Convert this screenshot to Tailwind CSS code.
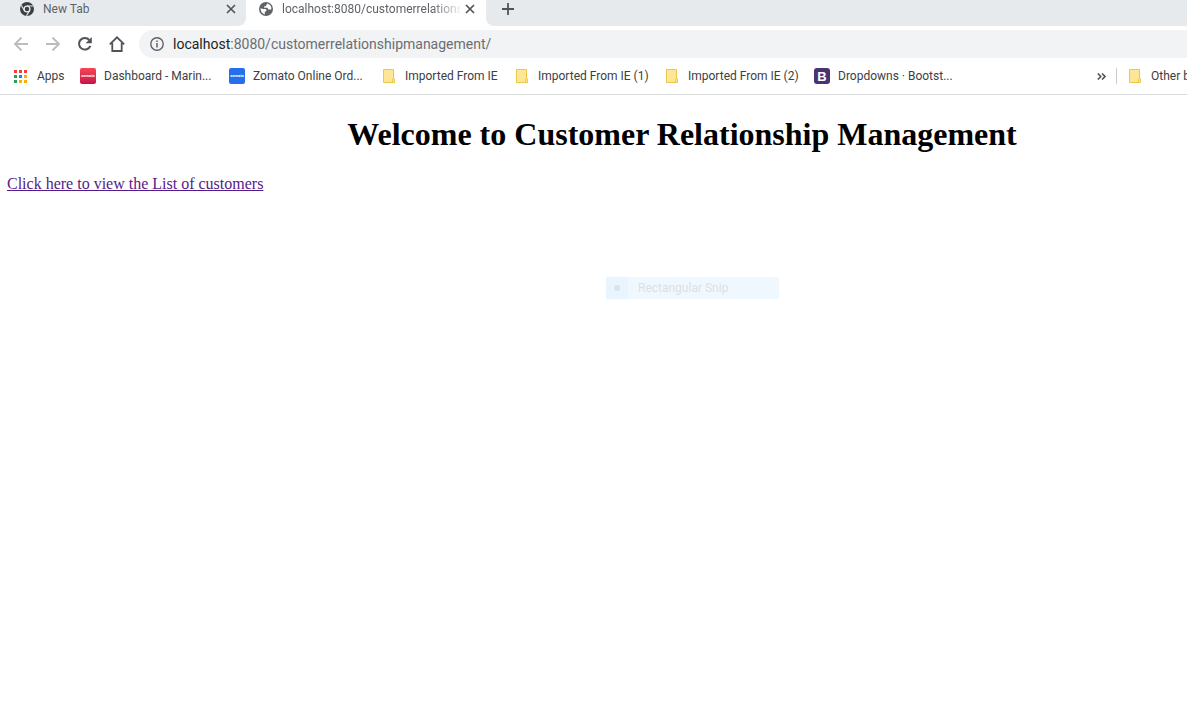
<!DOCTYPE html>
<html lang="en">
<head>
<meta charset="utf-8">
<title>Customer Relationship Management</title>
<script src="https://cdn.jsdelivr.net/npm/@tailwindcss/browser@4"></script>
</head>
<body class="min-h-screen overflow-x-hidden bg-white font-['Roboto','Open_Sans',sans-serif] text-[12px] leading-4 text-[#3c4043]">
<svg class="hidden">
  <symbol id="folder" viewBox="0 0 13 14"><path d="M.5.5h10v9.500h1v3.500H.5z" fill="#ffe694" stroke="#ebc84b"/><path d="M9.500 13.500V10.500q0-1 1-1t1 1v2q0 1-1 1z" fill="#ffe694" stroke="#ebc84b"/></symbol>
  <symbol id="close" viewBox="0 0 10 10"><path d="M1 1l8 8M9 1L1 9" stroke="#505459" stroke-width="1.700"/></symbol>
</svg>
<header class="border-b border-[#d9dbdd]">
  <div class="flex h-[26px] bg-white">
    <div class="flex h-full w-[246px] shrink-0 items-start rounded-br-lg bg-[#e7eaed] pt-px pl-5">
      <svg class="mt-px size-[14px] shrink-0" viewBox="0 0 14 14"><circle cx="7" cy="7" r="7" fill="#3c4043"/><circle cx="7" cy="7" r="2.900" fill="#3c4043" stroke="#e7eaed" stroke-width="1.300"/><path d="M7 4h6.300M4.400 8.500L1.200 3.200M9.600 8.500L6.500 13.800" stroke="#e7eaed" stroke-width="1.100"/></svg>
      <span class="ml-[9px] flex-1 text-[#5f6368]">New Tab</span>
      <button aria-label="Close New Tab" class="mt-[3px] mr-[10px]"><svg class="size-[10px]"><use href="#close"/></svg></button>
    </div>
    <div class="flex w-[240px] shrink-0 items-start pt-px pl-[13px]">
      <svg class="mt-px size-[14px] shrink-0" viewBox="0 0 14 14"><circle cx="7" cy="7" r="7" fill="#5f6368"/><path d="M1.500 6.300L4 7h2.500l1.200 1.200-.8 1.300H5.800v2.900Q1.500 11 1.500 6.300zM8.500 1.600L7.200 3v1L5 4.600l.3 1.200h3l1.200 1.700h2.800Q13 3.300 8.500 1.600z" fill="white"/></svg>
      <span class="ml-[9px] w-[178px] overflow-hidden whitespace-nowrap text-[#5f6368] [mask-image:linear-gradient(to_right,black_150px,transparent_182px)]">localhost:8080/customerrelations</span>
      <button aria-label="Close localhost" class="mt-[3px] ml-[5px]"><svg class="size-[10px]"><use href="#close"/></svg></button>
    </div>
    <div class="flex-1 rounded-bl-lg bg-[#e7eaed] pt-[3px] pl-4">
      <button aria-label="New tab" class="block"><svg class="size-3" viewBox="0 0 12 12"><path d="M6 0v12M0 6h12" stroke="#505459" stroke-width="1.800"/></svg></button>
    </div>
  </div>
  <div class="mt-1 flex h-7 items-center pl-[13px]">
    <button aria-label="Back" class="mr-4"><svg class="size-4" viewBox="0 0 16 16" fill="none" stroke="#babcbe" stroke-width="1.800"><path d="M15 8H2M8.500 1.500L2 8l6.500 6.500"/></svg></button>
    <button aria-label="Forward" class="mr-4"><svg class="size-4" viewBox="0 0 16 16" fill="none" stroke="#babcbe" stroke-width="1.800"><path d="M1 8h13M7.500 1.500L14 8l-6.500 6.500"/></svg></button>
    <button aria-label="Reload" class="mr-4"><svg class="size-4" viewBox="0 0 16 16"><path d="M13.300 9.800A5.800 5.800 0 1 1 12.300 4" fill="none" stroke="#505459" stroke-width="2"/><path d="M14.800 1v6.200H8.600z" fill="#505459"/></svg></button>
    <button aria-label="Home" class="mr-[14px]"><svg class="size-4" viewBox="0 0 16 16" fill="none" stroke="#505459" stroke-width="1.800"><path d="M.8 8.300L8 1.300l7.200 7M3.300 7v8h9.400V7"/></svg></button>
    <div class="flex h-7 min-w-0 flex-1 items-center rounded-l-full bg-[#f1f3f4] pl-[11px]">
      <svg class="size-[14px] shrink-0" viewBox="0 0 14 14"><circle cx="7" cy="7" r="6.200" fill="none" stroke="#5f6368" stroke-width="1.400"/><path d="M7 6v4.500M7 3.500V5" stroke="#5f6368" stroke-width="1.500"/></svg>
      <div contenteditable="true" role="textbox" aria-label="Address" class="ml-[9px] flex-1 text-[14px] leading-5 text-[#6a6e73]"><span class="text-[#202124]">localhost</span>:8080/customerrelationshipmanagement/</div>
    </div>
  </div>
  <nav aria-label="Bookmarks" class="flex h-9 items-center overflow-hidden pl-[14px] whitespace-nowrap">
    <a href="#" class="flex w-[66px] shrink-0 items-center gap-[10px]"><svg class="size-[13px] shrink-0" viewBox="0 0 13 13"><path d="M0 0h3v3H0zM5 0h3v3H5zM10 0h3v3h-3z" fill="#ee4035"/><path d="M0 5h3v3H0zM0 10h3v3H0z" fill="#2d9f54"/><path d="M5 5h3v3H5z" fill="#1a84f5"/><path d="M10 5h3v3h-3zM5 10h3v3H5zM10 10h3v3h-3z" fill="#f9ad05"/></svg>Apps</a>
    <a href="#" class="flex w-[149px] shrink-0 items-center gap-2"><span class="grid size-4 shrink-0 place-items-center rounded-xs bg-linear-to-b from-[#f84450] to-[#c9124c] text-[4px] leading-none font-bold text-white">zomato</span>Dashboard - Marin...</a>
    <a href="#" class="flex w-[154px] shrink-0 items-center gap-2"><span class="grid size-4 shrink-0 place-items-center rounded-xs bg-[#256fef] text-[4px] leading-none font-bold text-white">zomato</span>Zomato Online Ord...</a>
    <a href="#" class="flex w-[133px] shrink-0 items-center gap-[9px]"><svg class="h-[14px] w-[13px] shrink-0"><use href="#folder"/></svg>Imported From IE</a>
    <a href="#" class="flex w-[150px] shrink-0 items-center gap-[9px]"><svg class="h-[14px] w-[13px] shrink-0"><use href="#folder"/></svg>Imported From IE (1)</a>
    <a href="#" class="flex w-[148px] shrink-0 items-center gap-[9px]"><svg class="h-[14px] w-[13px] shrink-0"><use href="#folder"/></svg>Imported From IE (2)</a>
    <a href="#" class="flex shrink-0 items-center gap-2"><span class="grid size-4 shrink-0 place-items-center rounded-[3px] bg-[#4b3273] font-['Liberation_Sans',sans-serif] text-[13px] leading-none font-bold text-white">B</span>Dropdowns · Bootst...</a>
    <button aria-label="More bookmarks" class="ml-auto"><svg class="h-[7px] w-[9px]" viewBox="0 0 9 7" fill="none" stroke="#505459" stroke-width="1.600"><path d="M.8.5l3 3-3 3M5 .5l3 3-3 3"/></svg></button>
    <div class="ml-[10px] h-4 w-px shrink-0 bg-[#c8cacc]"></div>
    <a href="#" class="ml-3 flex w-[58px] shrink-0 items-center gap-[9px] overflow-hidden"><svg class="h-[14px] w-[13px] shrink-0"><use href="#folder"/></svg>Other bookmarks</a>
  </nav>
</header>
<main class="px-[7px] pt-[21px] font-['Liberation_Serif',serif] text-black">
  <h1 class="pl-[177px] text-center text-[32px] leading-9 font-bold">Welcome to Customer Relationship Management</h1>
  <a href="#" class="mt-[22px] inline-block text-[16px] leading-5 text-[#551a8b] underline">Click here to view the List of customers</a>
</main>
<div class="absolute top-[277px] left-[606px] flex h-[22px] w-[173px] items-center bg-[#f0f8ff] text-[#dedfe1]">
  <div class="grid h-full w-[22px] place-items-center bg-[#e8f4fe]"><span class="size-[6px] rounded-full bg-[#dfe1e4]"></span></div>
  <span class="ml-[10px]">Rectangular Snip</span>
</div>
</body>
</html>
